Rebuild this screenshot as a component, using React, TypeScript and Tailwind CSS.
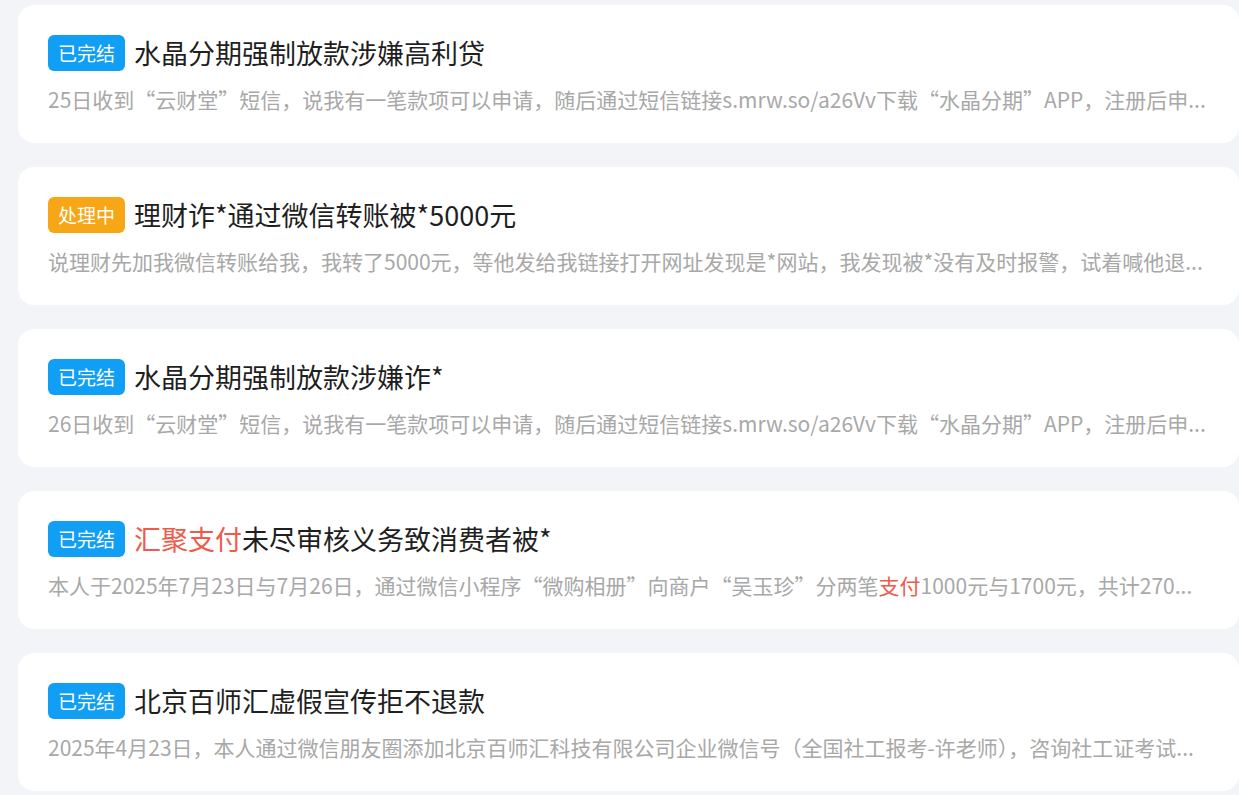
import React from "react";

type Item = {
  status: "done" | "doing";
  title: React.ReactNode;
  desc: React.ReactNode;
};

const items: Item[] = [
  {
    status: "done",
    title: "水晶分期强制放款涉嫌高利贷",
    desc: "25日收到“云财堂”短信，说我有一笔款项可以申请，随后通过短信链接s.mrw.so/a26Vv下载“水晶分期”APP，注册后申...",
  },
  {
    status: "doing",
    title: "理财诈*通过微信转账被*5000元",
    desc: "说理财先加我微信转账给我，我转了5000元，等他发给我链接打开网址发现是*网站，我发现被*没有及时报警，试着喊他退...",
  },
  {
    status: "done",
    title: "水晶分期强制放款涉嫌诈*",
    desc: "26日收到“云财堂”短信，说我有一笔款项可以申请，随后通过短信链接s.mrw.so/a26Vv下载“水晶分期”APP，注册后申...",
  },
  {
    status: "done",
    title: (
      <>
        <span className="text-[#ef5a4a]">汇聚支付</span>未尽审核义务致消费者被*
      </>
    ),
    desc: (
      <>
        本人于2025年7月23日与7月26日，通过微信小程序“微购相册”向商户“吴玉珍”分两笔
        <span className="text-[#ef5a4a]">支付</span>
        1000元与1700元，共计270...
      </>
    ),
  },
  {
    status: "done",
    title: "北京百师汇虚假宣传拒不退款",
    desc: "2025年4月23日，本人通过微信朋友圈添加北京百师汇科技有限公司企业微信号（全国社工报考-许老师），咨询社工证考试...",
  },
];

const Badge = ({ status }: { status: Item["status"] }) => {
  if (status === "doing") {
    return (
      <span className="shrink-0 h-[36px] px-[10px] rounded-[6px] bg-[#f7a615] text-white text-[19px] leading-[36px]">
        处理中
      </span>
    );
  }
  return (
    <span className="shrink-0 h-[36px] px-[10px] rounded-[6px] bg-[#109ff5] text-white text-[19px] leading-[36px]">
      已完结
    </span>
  );
};

export default function App() {
  return (
    <div
      className="min-h-[795px] bg-[#f2f4f8] pl-[18px] pt-[5px] flex flex-col gap-[24px]"
      style={{ fontFamily: '"Noto Sans CJK SC", "Noto Sans", sans-serif' }}
    >
      {items.map((item, i) => (
        <div key={i} className="bg-white rounded-2xl h-[138px] pl-[30px] pr-[24px] pt-[30px]">
          <div className="flex items-center gap-[9px] h-[36px]">
            <Badge status={item.status} />
            <h3 className="text-[27px] leading-[36px] text-[#1f1f1f] whitespace-nowrap">{item.title}</h3>
          </div>
          <p className="mt-[13px] text-[21px] leading-[30px] text-[#a8a8a8] whitespace-nowrap">{item.desc}</p>
        </div>
      ))}
    </div>
  );
}
